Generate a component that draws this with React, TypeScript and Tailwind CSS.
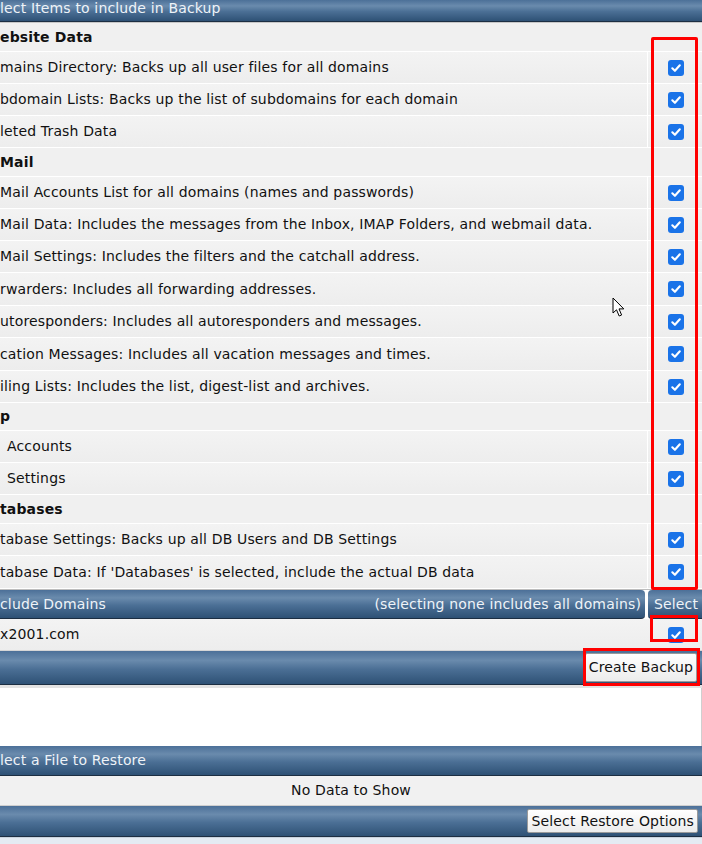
import React from "react"

type Item = { text: string; h?: number; pad?: number }
type Section = { title: string; h: number; items: Item[] }

const sections: Section[] = [
  {
    title: "ebsite Data",
    h: 29,
    items: [
      { text: "mains Directory: Backs up all user files for all domains" },
      { text: "bdomain Lists: Backs up the list of subdomains for each domain" },
      { text: "leted Trash Data" },
    ],
  },
  {
    title: "Mail",
    h: 29,
    items: [
      { text: "Mail Accounts List for all domains (names and passwords)" },
      { text: "Mail Data: Includes the messages from the Inbox, IMAP Folders, and webmail data." },
      { text: "Mail Settings: Includes the filters and the catchall address." },
      { text: "rwarders: Includes all forwarding addresses.", h: 33 },
      { text: "utoresponders: Includes all autoresponders and messages." },
      { text: "cation Messages: Includes all vacation messages and times.", h: 33 },
      { text: "iling Lists: Includes the list, digest-list and archives." },
    ],
  },
  {
    title: "p",
    h: 28,
    items: [
      { text: "Accounts", pad: 7 },
      { text: "Settings", pad: 7 },
    ],
  },
  {
    title: "tabases",
    h: 29,
    items: [
      { text: "tabase Settings: Backs up all DB Users and DB Settings" },
      { text: "tabase Data: If 'Databases' is selected, include the actual DB data", h: 33 },
    ],
  },
]

const bar =
  "bg-[linear-gradient(to_bottom,#4c7098_0%,#6a8bad_28%,#4b6f95_55%,#2e5175_100%)] border-b border-[#1c2e42] text-[#eef3f8]"

function Check() {
  return (
    <span className="flex h-[16px] w-[16px] items-center justify-center rounded-[3px] bg-[#1a73e8]">
      <svg width="12" height="12" viewBox="0 0 12 12">
        <path d="M2.3 6.3 L4.9 8.8 L9.8 3.3" fill="none" stroke="#fff" strokeWidth="2.1" strokeLinecap="round" strokeLinejoin="round" />
      </svg>
    </span>
  )
}

function Button({ label }: { label: string }) {
  return (
    <button className="h-full rounded-[2px] border border-[#9a9a9a] bg-[linear-gradient(to_bottom,#ffffff,#ececec)] px-[3px] text-[#111]">
      {label}
    </button>
  )
}

export default function App() {
  return (
    <div className="relative h-[844px] w-[702px] overflow-hidden bg-white font-['DejaVu_Sans',sans-serif] text-[14px] tracking-[0.15px] text-[#111]">
      {/* items to back up */}
      <div className={`${bar} flex h-[22px] items-start leading-[16px]`}>
        <span>lect Items to include in Backup</span>
      </div>
      <div className="h-px bg-[#c8c8c8]" />

      {sections.map((s) => (
        <div key={s.title}>
          <div
            className="flex items-center border-b border-white bg-[#f0f0f0] font-bold"
            style={{ height: s.h }}
          >
            <span>{s.title}</span>
          </div>
          {s.items.map((it) => (
            <div
              key={it.text}
              className="flex border-b border-white bg-[linear-gradient(to_bottom,#f3f3f3,#ededed)]"
              style={{ height: it.h ?? 32 }}
            >
              <div className="flex w-[648px] items-center border-r border-white">
                <span className="whitespace-nowrap" style={{ paddingLeft: it.pad ?? 0 }}>
                  {it.text}
                </span>
              </div>
              <div className="flex flex-1 items-center justify-center pl-[2px]">
                <Check />
              </div>
            </div>
          ))}
        </div>
      ))}

      {/* domains */}
      <div className="h-px bg-[#bdbdbd]" />
      <div className="flex h-[29px] gap-[3px]">
        <div className={`${bar} flex w-[645px] items-center justify-between rounded-r-[4px] pr-[4px]`}>
          <span>clude Domains</span>
          <span>(selecting none includes all domains)</span>
        </div>
        <div className={`${bar} flex flex-1 items-center rounded-l-[4px] pl-[6px]`}>Select</div>
      </div>
      <div className="flex h-[32px] border-b border-[#d6d6d6] bg-[linear-gradient(to_bottom,#f3f3f3,#ededed)]">
        <div className="flex w-[648px] items-center">x2001.com</div>
        <div className="flex flex-1 items-center justify-center pl-[2px]">
          <Check />
        </div>
      </div>
      <div className={`${bar} flex h-[34px] items-center justify-end py-[2px] pr-[5px]`}>
        <Button label="Create Backup" />
      </div>
      <div className="h-[3px] bg-[#e2e2e2]" />

      <div className="h-[58px] border-r border-[#cfcfcf] bg-white" />

      {/* restore */}
      <div className={`${bar} flex h-[30px] items-center`}>lect a File to Restore</div>
      <div className="flex h-[30px] items-center justify-center border-b border-[#cfcfcf] bg-[#f1f1f1]">
        No Data to Show
      </div>
      <div className={`${bar} flex h-[31px] items-center justify-end py-[3px] pr-[4px]`}>
        <Button label="Select Restore Options" />
      </div>
      <div className="h-[10px] border-t border-[#c9d3de] bg-[#e4ebf3]" />

      {/* annotations */}
      <div className="absolute left-[651px] top-[37px] h-[553px] w-[47px] rounded-[2px] border-[3px] border-[#ff0000]" />
      <div className="absolute left-[650px] top-[615px] h-[27px] w-[48px] border-[3px] border-[#ff0000]" />
      <div className="absolute left-[583px] top-[648px] h-[38px] w-[117px] border-[3px] border-[#ff0000]" />

      {/* mouse pointer */}
      <svg className="absolute left-[612px] top-[297px]" width="14" height="22" viewBox="0 0 14 22">
        <path d="M1 1 L1 16 L4.5 12.8 L7.2 19 L9.6 18 L7 11.9 L11.8 11.9 Z" fill="#fff" stroke="#000" strokeWidth="1" strokeLinejoin="round" />
      </svg>
    </div>
  )
}
